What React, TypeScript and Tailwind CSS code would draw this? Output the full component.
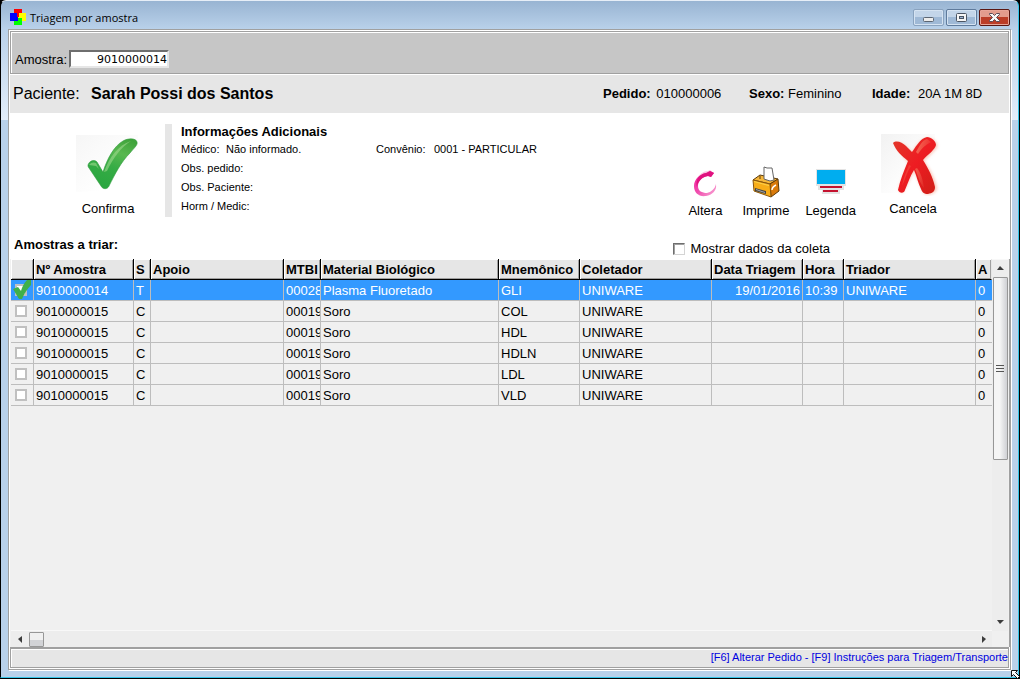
import { useState } from 'react';
import type { ReactNode } from 'react';
import { twMerge } from 'tailwind-merge';

interface Sample {
  id: string;
  status: string;
  mtbi: string;
  material: string;
  mnemonic: string;
  date: string;
  time: string;
  sorter: string;
}

const SAMPLES: Sample[] = [
  { id: '9010000014', status: 'T', mtbi: '00028', material: 'Plasma Fluoretado', mnemonic: 'GLI', date: '19/01/2016', time: '10:39', sorter: 'UNIWARE' },
  { id: '9010000015', status: 'C', mtbi: '00019', material: 'Soro', mnemonic: 'COL', date: '', time: '', sorter: '' },
  { id: '9010000015', status: 'C', mtbi: '00019', material: 'Soro', mnemonic: 'HDL', date: '', time: '', sorter: '' },
  { id: '9010000015', status: 'C', mtbi: '00019', material: 'Soro', mnemonic: 'HDLN', date: '', time: '', sorter: '' },
  { id: '9010000015', status: 'C', mtbi: '00019', material: 'Soro', mnemonic: 'LDL', date: '', time: '', sorter: '' },
  { id: '9010000015', status: 'C', mtbi: '00019', material: 'Soro', mnemonic: 'VLD', date: '', time: '', sorter: '' },
];

const COLUMNS = [
  { label: '', width: 'w-[23px]' },
  { label: 'Nº Amostra', width: 'w-[100px]' },
  { label: 'S', width: 'w-[17px]' },
  { label: 'Apoio', width: 'w-auto' },
  { label: 'MTBI', width: 'w-[37px]' },
  { label: 'Material Biológico', width: 'w-[178px]' },
  { label: 'Mnemônico', width: 'w-[81px]' },
  { label: 'Coletador', width: 'w-[132px]' },
  { label: 'Data Triagem', width: 'w-[91px]' },
  { label: 'Hora', width: 'w-[41px]' },
  { label: 'Triador', width: 'w-[132px]' },
  { label: 'A', width: 'w-[16px]' },
];

function AppIcon() {
  return (
    <svg width="16" height="16" viewBox="0 0 16 16" shapeRendering="crispEdges">
      <path fill="#f00" d="M4 0h8v5H9v3H7V4H4z" />
      <path fill="#00f" d="M0 4h7v4h1v4H0z" />
      <path fill="#ff0" d="M9 4h7v8h-4V9H8V8h1z" />
      <path fill="#0f0" d="M8 8v1h4v7H4v-4h4z" />
    </svg>
  );
}

function ConfirmIcon() {
  return (
    <svg width="64" height="62" viewBox="0 0 64 62">
      <defs>
        <linearGradient id="confirmGreen" x1="0.8" y1="0" x2="0.4" y2="1">
          <stop offset="0" stopColor="#3fa33b" />
          <stop offset="0.3" stopColor="#58b850" />
          <stop offset="0.6" stopColor="#35ac45" />
          <stop offset="1" stopColor="#2aa640" />
        </linearGradient>
        <linearGradient id="confirmPaper" x1="0" y1="0" x2="1" y2="1">
          <stop offset="0" stopColor="#f6f6f6" />
          <stop offset="0.7" stopColor="#ffffff" />
        </linearGradient>
      </defs>
      <path fill="url(#confirmPaper)" d="M0 1h62v36L40 56 0 58z" />
      <path
        fill="url(#confirmGreen)"
        stroke="#2f9a3a"
        strokeWidth="0.6"
        d="M12 31c1-4 6-6 9-3l6 10C31 25 38 12 47 7c5-3 13-3 14 1 1 3-3 6-7 11-9 9-15 21-21 33-1 3-6 4-8 0L13 34c-1-1-1-2-1-3z"
      />
      <path fill="#a5dc94" opacity="0.55" d="M28 38C33 24 42 11 55 7c-10 6-18 17-24 30zM13 31c2-3 5-3 7-2l3 6-3-3z" />
    </svg>
  );
}

function CancelIcon() {
  return (
    <svg width="64" height="62" viewBox="0 0 64 62">
      <defs>
        <linearGradient id="cancelRed" x1="0" y1="0" x2="1" y2="1">
          <stop offset="0" stopColor="#e2382a" />
          <stop offset="0.5" stopColor="#ee1c22" />
          <stop offset="1" stopColor="#cf1f17" />
        </linearGradient>
        <linearGradient id="cancelArm" x1="0" y1="0" x2="1" y2="0.6">
          <stop offset="0" stopColor="#f5705a" />
          <stop offset="1" stopColor="#f5705a" stopOpacity="0" />
        </linearGradient>
        <linearGradient id="cancelPaper" x1="0" y1="0" x2="1" y2="1">
          <stop offset="0" stopColor="#f2f2f2" />
          <stop offset="0.7" stopColor="#ffffff" />
        </linearGradient>
        <filter id="cancelGlow" x="-20%" y="-20%" width="140%" height="140%">
          <feGaussianBlur stdDeviation="1.6" />
        </filter>
      </defs>
      <path fill="url(#cancelPaper)" d="M0 0h54v40L30 59H0z" />
      <path
        fill="#f7a58e"
        opacity="0.6"
        filter="url(#cancelGlow)"
        d="M14 10c4-3 10 0 17 8 5-7 9-14 16-14 6 0 11 5 9 10L43 27c6 8 11 17 13 27 0 6-11 9-14 4L33 37 23 57c-2 3-6 1-5-4l9-24z"
      />
      <path
        fill="url(#cancelRed)"
        d="M12 9c3-3 9-1 13 3l6 6C36 11 40 4 46 3c4 0 9 4 9 8-1 5-8 9-13 15 5 8 10 17 12 27 0 5-3 6-7 7-4 0-6-2-7-5-3-6-4-12-7-19-4 6-6 13-9 20-1 4-6 3-7 0 2-10 6-19 10-29-6-5-12-10-15-18z"
      />
      <path fill="url(#cancelArm)" d="M35 18c3-5 6-12 11-13l4 3c-6 3-10 7-13 12zM36 34c4 5 6 12 7 20-5-6-6-13-9-19z" />
      <path fill="#f2644d" opacity="0.4" d="M28 31l2 1c-4 6-6 14-9 20 1-7 4-14 7-21z" />
    </svg>
  );
}

function AlteraIcon() {
  return (
    <svg width="26" height="28" viewBox="0 0 26 28">
      <defs>
        <linearGradient id="alteraPink" x1="0" y1="0" x2="1" y2="1">
          <stop offset="0" stopColor="#f21b9b" />
          <stop offset="0.5" stopColor="#f04dae" />
          <stop offset="1" stopColor="#f9a8d6" />
        </linearGradient>
      </defs>
      <path fill="#fbc4e2" d="M4 11C7 5 12 2 16 2l2-1 4 3-3 2C12 5 8 8 5 12z" />
      <path
        fill="url(#alteraPink)"
        d="M22 4l-3 4-3-1c-6 1-10 5-10 10 0 5 4 7 9 7 4-1 8-4 9-9 1 7-4 11-10 12C7 28 2 24 2 17 2 10 8 5 15 4l3-2z"
      />
      <path fill="#e0127f" d="M14 4l4-2 4 2-3 4-3-1C10 8 6 12 5 18 3 11 7 5 14 4z" />
    </svg>
  );
}

function PrinterIcon() {
  return (
    <svg width="28" height="32" viewBox="0 0 28 32">
      <path fill="#f5b63a" stroke="#5b3a0b" strokeWidth="1" d="M1 14l7-5 18 4-8 5z" />
      <path fill="#fff" stroke="#666" strokeWidth="1" d="M12 13V1l3 1 5 0 2 12-4 1z" />
      <path fill="#d97a0a" stroke="#5b3a0b" strokeWidth="1" d="M18 18l8-5 1 12-8 6z" />
      <path fill="#f8ad18" stroke="#8a560c" strokeWidth="1" d="M1 14l17 4 1 13L2 25z" />
      <path fill="#fbd14d" d="M2 15l15 4v1L2 16z" />
      <path fill="#444" d="M3 22l11 3v3L3 25z" />
      <path fill="#a9a9a9" d="M4 23l9 3v1l-9-3z" />
      <path fill="none" stroke="#fff" strokeWidth="1.4" d="M20 24c0-2 2-4 4-5" />
      <path stroke="#5b3a0b" d="M8 10v3" />
    </svg>
  );
}

function LegendIcon() {
  return (
    <svg width="30" height="26" viewBox="0 0 30 26" shapeRendering="crispEdges">
      <path fill="#e4e4e4" d="M0 0h30v17H0zM2 17h26v4H2zM6 21h18v4H6z" />
      <path fill="#00adef" d="M1 1h28v14H1z" />
      <path fill="#c4122f" d="M4 17h22v2H4zM7 21h15v2H7z" />
    </svg>
  );
}

function ArrowIcon({ direction }: { direction: 'up' | 'down' | 'left' | 'right' }) {
  const paths = {
    up: 'M1 6L4 2 8 6z',
    down: 'M1 2h7L4 6z',
    left: 'M6 1v7L2 4z',
    right: 'M3 1v7l4-4z',
  };
  return (
    <svg width="9" height="9" viewBox="0 0 9 9">
      <path fill="#3c3c3c" d={paths[direction]} />
    </svg>
  );
}

function ActionButton({ label, icon, className }: { label: string; icon: ReactNode; className?: string }) {
  return (
    <button type="button" className={twMerge('flex flex-col items-center text-[13px] leading-4', className)}>
      {icon}
      <span>{label}</span>
    </button>
  );
}

function TitleBar() {
  const control =
    'flex h-[17px] w-[31px] items-center justify-center rounded-[2px] border border-[#5f7b9c] bg-linear-to-b from-[#c3d5e9] from-50% to-[#9fb9d6] to-50% shadow-[inset_0_0_0_1px_#d5e3f2]';

  return (
    <header className="flex h-7 items-center pl-0.5 pr-px pt-1">
      <AppIcon />
      <h1 className="ml-1 flex-1 pt-0.5 font-['Open_Sans',sans-serif] text-[11px] leading-4">Triagem por amostra</h1>
      <div className="flex gap-0.5">
        <button type="button" aria-label="Minimizar" className={twMerge(control, 'border-[#8aa3bf]')}>
          <svg width="13" height="11" viewBox="0 0 13 11">
            <rect x="1.5" y="5.5" width="10" height="4" rx="1" fill="#ececec" stroke="#5c6673" />
          </svg>
        </button>
        <button type="button" aria-label="Maximizar" className={control}>
          <svg width="13" height="11" viewBox="0 0 13 11">
            <rect x="1.5" y="1.5" width="10" height="8" rx="1" fill="#f6f6f6" stroke="#4b5563" />
            <rect x="4.5" y="4.5" width="4" height="2" fill="#9db5d3" stroke="#4b5563" />
          </svg>
        </button>
        <button
          type="button"
          aria-label="Fechar"
          className={twMerge(
            control,
            'border-[#5a1712] from-[#e39c8d] to-[#bb3d27] shadow-[inset_0_0_0_1px_#e8a598]'
          )}
        >
          <svg width="13" height="11" viewBox="0 0 13 11">
            <path
              fill="#f8f8f8"
              stroke="#5b4b57"
              d="M1.500 1.500h3l2 2 2-2h3v1L8.500 5.500l3 3v1h-3l-2-2-2 2h-3v-1l3-3-3-3z"
            />
          </svg>
        </button>
      </div>
    </header>
  );
}

function SampleTable() {
  const [checked, setChecked] = useState([true, false, false, false, false, false]);

  const toggle = (index: number) => {
    setChecked((current) => current.map((value, i) => (i === index ? !value : value)));
  };

  return (
    <table className="w-full table-fixed border-separate border-spacing-0 text-[13px] leading-4">
      <thead>
        <tr>
          {COLUMNS.map((column, index) => (
            <th
              key={index}
              className={twMerge(
                'h-[21px] overflow-hidden whitespace-nowrap border-b border-r border-black bg-[#e6e6e6] p-0 pl-0.5 pt-0.5 text-left font-bold shadow-[inset_1px_1px_0_#fff,inset_-1px_-1px_0_#a0a0a0]',
                column.width,
                index === COLUMNS.length - 1 && 'border-r-[#e6e6e6]'
              )}
            >
              {column.label}
            </th>
          ))}
        </tr>
      </thead>
      <tbody>
        {SAMPLES.map((sample, index) => {
          const cells = [
            sample.id,
            sample.status,
            '',
            sample.mtbi,
            sample.material,
            sample.mnemonic,
            'UNIWARE',
            sample.date,
            sample.time,
            sample.sorter,
            '0',
          ];

          return (
            <tr key={index} className={index === 0 ? 'bg-[#3399ff] text-white' : 'bg-[#f0f0f0]'}>
              <td className="h-[21px] border-b border-r border-[#bdbdbd] p-0">
                <label className="relative flex pl-1">
                  <input
                    type="checkbox"
                    aria-label={`Selecionar ${sample.mnemonic}`}
                    checked={checked[index]}
                    onChange={() => toggle(index)}
                    className="size-3 appearance-none border-2 border-[#c0c0c0] bg-white"
                  />
                  {checked[index] && (
                    <svg className="absolute -top-1 left-0.5" width="18" height="19" viewBox="0 0 18 19">
                      <path fill="#3fb049" d="M0 9l5-2 3 4C9 7 11 3 14 0h4v5c-4 4-7 9-9 14H6z" />
                    </svg>
                  )}
                </label>
              </td>
              {cells.map((cell, i) => (
                <td
                  key={i}
                  className={twMerge(
                    'h-[21px] overflow-hidden whitespace-nowrap border-b border-r border-[#bdbdbd] p-0 pl-0.5 pt-0.5',
                    i === 7 && 'pr-0.5 text-right',
                    i === cells.length - 1 && 'border-r-0'
                  )}
                >
                  {cell}
                </td>
              ))}
            </tr>
          );
        })}
      </tbody>
    </table>
  );
}

function VerticalScrollbar() {
  return (
    <div className="flex w-4 flex-1 flex-col items-center border-t border-[#f8f8f8] bg-[#ededed]">
      <button type="button" aria-label="Rolar para cima" className="flex h-[17px] w-full items-center justify-center">
        <ArrowIcon direction="up" />
      </button>
      <div className="flex h-[183px] w-[15px] flex-col items-center justify-center gap-0.5 rounded-[1px] border border-[#979797] bg-linear-to-r from-[#f5f5f5] from-45% to-[#cfd0d4]">
        <span className="h-px w-2 bg-[#555]" />
        <span className="h-px w-2 bg-[#555]" />
        <span className="h-px w-2 bg-[#555]" />
      </div>
      <div className="flex-1" />
      <button type="button" aria-label="Rolar para baixo" className="flex h-[17px] w-full items-center justify-center">
        <ArrowIcon direction="down" />
      </button>
    </div>
  );
}

function HorizontalScrollbar() {
  return (
    <div className="flex h-[17px] items-center border-t border-[#f8f8f8] bg-[#ededed]">
      <button type="button" aria-label="Rolar para a esquerda" className="flex w-[18px] justify-center">
        <ArrowIcon direction="left" />
      </button>
      <div className="size-[15px] rounded-[1px] border border-[#979797] bg-linear-to-b from-[#f0f0f0] from-50% to-[#d2d3d6] to-50%" />
      <div className="flex-1" />
      <button type="button" aria-label="Rolar para a direita" className="flex w-[18px] justify-center">
        <ArrowIcon direction="right" />
      </button>
    </div>
  );
}

export default function App() {
  return (
    <div className="flex min-h-screen flex-col bg-black font-['Liberation_Sans',Arial,sans-serif] text-black">
      <div className="relative mb-px mr-px flex flex-1 flex-col rounded-t-md border border-b-[#35c5e8] border-l-black border-r-[#35c5e8] border-t-[#e6eef7] bg-[linear-gradient(#98b4d2,#b9d1ea_28px,#e3eefa_119px,#b9d1ea_119px)] px-[7px] pb-[7px]">
        <TitleBar />

        <div className="flex flex-1 flex-col border border-[#a0a0a0] bg-white shadow-[1px_1px_0_#fff]">
          <div className="m-px border border-[#a0a0a0] bg-[#c6c6c6] shadow-[inset_1px_1px_0_#fff]">
            <div className="flex h-[41px] items-end pb-[5px] pl-1 text-[13px] leading-4">
              <label htmlFor="amostra">Amostra:</label>
              <input
                id="amostra"
                defaultValue="9010000014"
                className="ml-0.5 h-[18px] w-[100px] border-2 border-b-[#e6e6e6] border-l-[#6e6e6e] border-r-[#e6e6e6] border-t-[#6e6e6e] bg-white text-right font-['DejaVu_Sans',sans-serif] text-[11px] outline-none"
              />
            </div>
          </div>

          <section className="mx-px flex h-[38px] items-center bg-[#e6e6e6] pl-[3px] text-[13px]">
            <span className="w-[78px] text-[16px]">Paciente:</span>
            <strong className="flex-1 text-[16px]">Sarah Possi dos Santos</strong>
            <p className="w-[146px]">
              <strong className="mr-0.5">Pedido:</strong> 010000006
            </p>
            <p className="w-[123px]">
              <strong>Sexo:</strong> Feminino
            </p>
            <p className="w-[137px]">
              <strong className="mr-1">Idade:</strong> 20A 1M 8D
            </p>
          </section>

          <section className="flex h-[120px] pt-[11px]">
            <ActionButton label="Confirma" icon={<ConfirmIcon />} className="ml-[67px] mt-2.5 gap-[5px] self-start" />
            <div className="ml-[25px] h-[93px] w-[7px] bg-[#e6e6e6]" />
            <div className="ml-[9px] flex-1 text-[11px]">
              <h2 className="text-[13px] font-bold leading-4">Informações Adicionais</h2>
              <dl className="grid grid-cols-[auto_150px_58px_1fr] leading-[19px]">
                <dt className="w-[45px]">Médico:</dt>
                <dd>Não informado.</dd>
                <dt>Convênio:</dt>
                <dd>0001 - PARTICULAR</dd>
                <dt className="col-span-4">Obs. pedido:</dt>
                <dt className="col-span-4">Obs. Paciente:</dt>
                <dt className="col-span-4">Horm / Medic:</dt>
              </dl>
            </div>
            <div className="mr-[65px] flex items-start">
              <ActionButton label="Altera" icon={<AlteraIcon />} className="mt-[45px] gap-1.5" />
              <ActionButton label="Imprime" icon={<PrinterIcon />} className="ml-5 mt-[42px] gap-[5px]" />
              <ActionButton label="Legenda" icon={<LegendIcon />} className="ml-4 mt-[45px] gap-2" />
              <ActionButton label="Cancela" icon={<CancelIcon />} className="ml-[25px] mt-2.5 gap-[5px]" />
            </div>
          </section>

          <section className="flex h-[26px] items-start justify-between pl-[5px] pr-[180px] text-[13px] leading-4">
            <h2 className="mt-1 font-bold">Amostras a triar:</h2>
            <label className="mt-2 flex items-center gap-1.5">
              <input
                type="checkbox"
                className="size-3 appearance-none border border-b-[#d4d4d4] border-l-[#6e6e6e] border-r-[#d4d4d4] border-t-[#6e6e6e] bg-white shadow-[inset_1px_1px_0_#a0a0a0] checked:bg-[#3399ff]"
              />
              Mostrar dados da coleta
            </label>
          </section>

          <div className="ml-px flex flex-1 border-r border-[#a0a0a0] bg-[#f0f0f0] pl-px pr-px">
            <div className="flex min-w-0 flex-1 flex-col">
              <div className="flex-1">
                <SampleTable />
              </div>
              <HorizontalScrollbar />
            </div>
            <div className="flex flex-col">
              <VerticalScrollbar />
              <div className="size-4 bg-[#f0f0f0]" />
            </div>
          </div>

          <footer className="m-px mt-0 h-[21px] border border-t-2 border-[#a0a0a0] bg-[#e6e6e6] text-right text-[11px] leading-4 text-[#0000e0] shadow-[inset_1px_1px_0_#fff]">
            [F6] Alterar Pedido - [F9] Instruções para Triagem/Transporte
          </footer>
        </div>

        {/* Resize cursor over the window corner */}
        <svg className="absolute -bottom-0.5 -right-0.5" width="10" height="10" viewBox="0 0 10 10">
          <path fill="#fff" stroke="#111" d="M1.500 1.500h6L5.500 3.500l4 4-2 2-4-4-2 2z" />
        </svg>
      </div>
    </div>
  );
}
